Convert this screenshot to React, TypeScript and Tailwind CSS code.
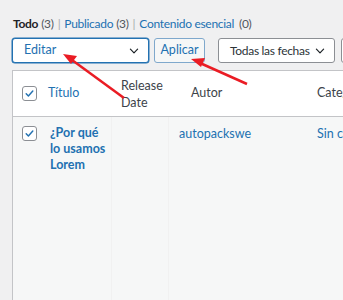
const Check = () => (
  <span className="w-[15px] h-[15px] border border-[#8c8f94] rounded-[3px] bg-white flex items-center justify-center shrink-0">
    <svg width="11" height="11" viewBox="0 0 20 20">
      <path d="M4 10.5l4 4 8-9" fill="none" stroke="#2271b1" strokeWidth="2.6" strokeLinecap="round" strokeLinejoin="round" />
    </svg>
  </span>
);

const Chevron = () => (
  <svg width="12" height="12" viewBox="0 0 20 20">
    <path d="M4 7l6 6 6-6" fill="none" stroke="#1d2327" strokeWidth="2" strokeLinecap="round" strokeLinejoin="round" />
  </svg>
);

const App: React.FC = () => {
  return (
    <div className="relative w-[343px] h-[300px] overflow-hidden bg-[#f0f0f1] text-[12px] text-[#3c434a]" style={{ fontFamily: 'Lato, "Noto Sans", sans-serif' }}>
      <div className="pl-[13px] pt-[10px] h-[38px] flex items-center whitespace-nowrap tracking-[-0.3px]">
        <span className="font-bold text-[#1d2327]">Todo</span>
        <span className="text-[#50575e] ml-[3px]">(3)</span>
        <span className="text-[#a7aaad] mx-[4px]">|</span>
        <span className="text-[#2271b1]">Publicado</span>
        <span className="text-[#50575e] ml-[3px]">(3)</span>
        <span className="text-[#a7aaad] mx-[4px]">|</span>
        <span className="text-[#2271b1]">Contenido esencial</span>
        <span className="text-[#50575e] ml-[5px]">(0)</span>
      </div>

      <div className="flex items-center pl-[12px] h-[25px] whitespace-nowrap text-[12.5px]">
        <div className="w-[137px] h-[25px] shrink-0 border border-[#2271b1] rounded-[3px] bg-white flex items-center justify-between pl-[11px] pr-[8px] text-[#2271b1] shadow-[0_0_0_0.5px_#2271b1]">
          <span>Editar</span>
          <Chevron />
        </div>
        <div className="ml-[5px] w-[51px] h-[25px] shrink-0 border border-[#7fa8cc] rounded-[3px] bg-[#f6f7f7] flex items-center justify-center text-[#2271b1]">
          Aplicar
        </div>
        <div className="ml-[13px] w-[117px] h-[25px] shrink-0 border border-[#8c8f94] rounded-[3px] bg-white flex items-center justify-between pl-[11px] pr-[8px] text-[12px] tracking-[-0.3px] text-[#2c3338]">
          <span>Todas las fechas</span>
          <Chevron />
        </div>
        <div className="ml-[6px] w-[20px] h-[25px] border border-[#8c8f94] rounded-[3px] bg-white shrink-0" />
      </div>

      <div className="mt-[7px] ml-[12px] border-l border-t border-[#c3c4c7] h-[240px] bg-[#f6f7f7] whitespace-nowrap text-[12.5px]">
        <div className="h-[46px] bg-white border-b border-[#c3c4c7] flex items-center">
          <div className="w-[35px] pl-[9px] shrink-0"><Check /></div>
          <div className="w-[73px] text-[#2271b1] shrink-0">Título</div>
          <div className="w-[70px] leading-[17px] shrink-0">Release<br />Date</div>
          <div className="w-[126px] shrink-0">Autor</div>
          <div className="shrink-0">Categ</div>
        </div>
        <div className="flex h-full">
          <div className="w-[35px] pl-[9px] pt-[9px] shrink-0"><Check /></div>
          <div className="w-[63px] pl-[2px] pt-[8px] font-bold text-[12.5px] leading-[16px] text-[#2271b1] whitespace-normal shrink-0">
            ¿Por qué lo usamos Lorem
          </div>
          <div className="w-[58px] border-x border-[#f1f1f1] shrink-0" />
          <div className="w-[148px] pl-[10px] pt-[8px] text-[#2271b1] shrink-0">autopackswe</div>
          <div className="pt-[8px] text-[#2271b1] shrink-0">Sin ca</div>
        </div>
      </div>

      <svg className="absolute left-0 top-0 pointer-events-none" width="343" height="300" viewBox="0 0 343 300">
        <line x1="124" y1="98" x2="72" y2="60" stroke="#ea1c24" strokeWidth="2.5" />
        <polygon points="63,54 77,56 71,64" fill="#ea1c24" />
        <line x1="247" y1="84" x2="200" y2="63" stroke="#ea1c24" strokeWidth="2.5" />
        <polygon points="191,59 205,58 201,67" fill="#ea1c24" />
      </svg>
    </div>
  );
};

export default App;
